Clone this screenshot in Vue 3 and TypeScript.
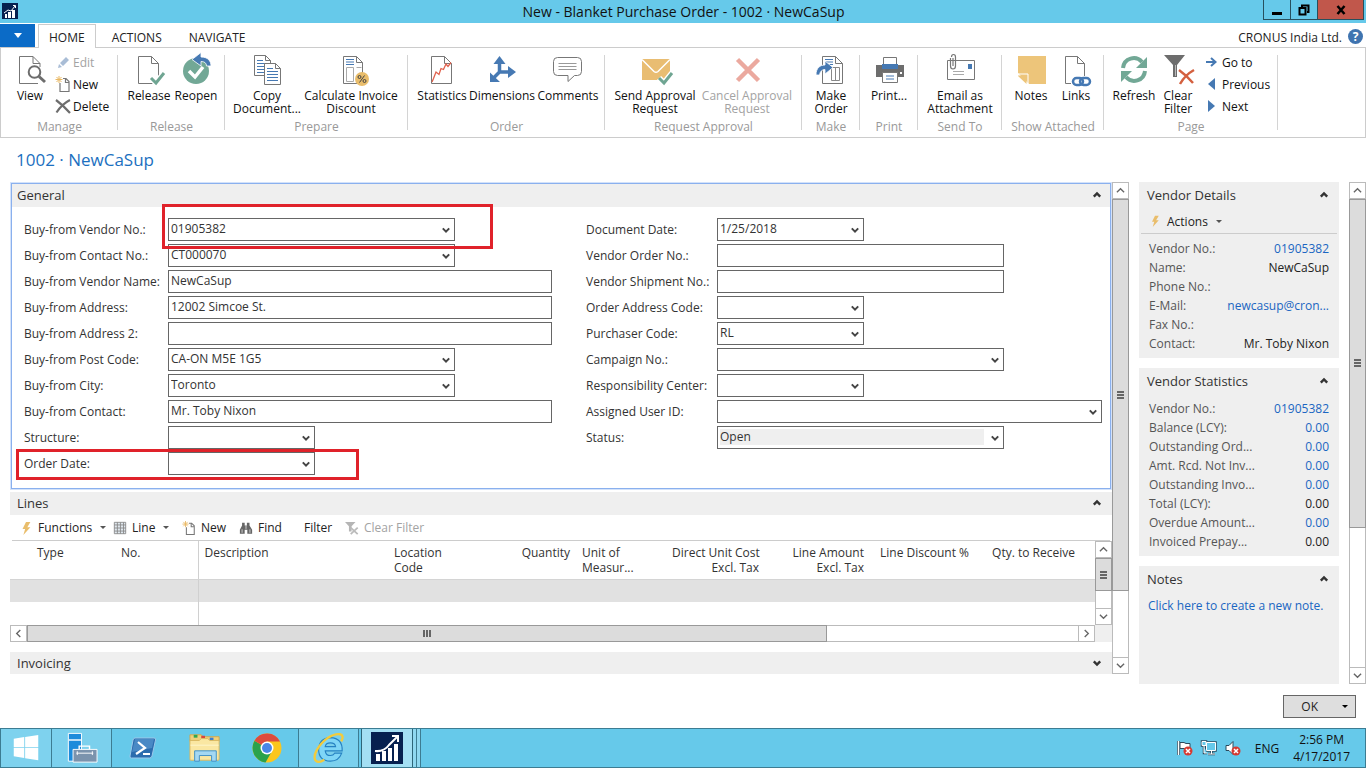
<script setup lang="ts">
import { ref } from 'vue'

interface RibbonButton { label: string; icon: string; disabled?: boolean }
interface RibbonGroup { id: string; caption: string; large: RibbonButton[]; small?: RibbonButton[] }
interface Field { id: string; label: string; value: string; size: 'date' | 'lookup' | 'full'; drop?: boolean; select?: boolean }
interface Fact { label: string; value: string; link?: boolean }

const page = (x: number, y: number, w: number, h: number, f: number): string =>
  `<path d="M${x} ${y}h${w - f}l${f} ${f}v${h - f}h-${w}z" fill="#fff" stroke="#777"/><path d="M${x + w - f} ${y}v${f}h${f}" fill="none" stroke="#777"/>`

const icons: Record<string, string> = {
  view: `<path d="M24 29.500H5.500v-27H19l7 7V13" fill="none" stroke="#777"/><path d="M19 2.500v7h7" fill="none" stroke="#777"/><circle cx="20.500" cy="18" r="5.800" fill="#fff" stroke="#6d6d6d" stroke-width="2"/><path d="M25 22.500l6 5.500" stroke="#6d6d6d" stroke-width="3"/>`,
  release: page(5.5, 2.5, 20, 27, 7) + `<path d="M18 24l5 5 8-10" fill="none" stroke="#fff" stroke-width="6"/><path d="M18 24l5 5 8-10" fill="none" stroke="#6fa592" stroke-width="3"/>`,
  reopen: `<circle cx="16" cy="17" r="13" fill="#72a896"/><path d="M9 17l6 6 8-10" fill="none" stroke="#fff" stroke-width="3.500"/><path d="M12 5.500l9-7v4.500c7 0 10 4 10 9h-4.500c0-3-2-4.500-5.500-4.500V12z" fill="#4679b3" stroke="#fff" stroke-width=".8"/>`,
  copy: page(3.5, 1.5, 16, 20, 5) + `<path d="M6 6.500h6M6 9.500h10M6 12.500h7M6 15.500h7M6 18.500h7" stroke="#4679b3"/>` + page(13.5, 9.5, 16, 21, 5) + `<path d="M16 14.500h6M16 17.500h11M16 20.500h11M16 23.500h11M16 26.500h11" stroke="#4679b3"/>`,
  calc: page(8.5, 2.5, 19, 27, 6) + `<path d="M11 5.500h8M11 8h8M11 10.500h8" stroke="#4679b3"/><path d="M11.500 13.500h7v14h-7zM21.500 13.500h5" fill="none" stroke="#aaa"/><circle cx="27" cy="25" r="7" fill="#e9bd6b"/><path d="M24.500 28.500l5-7" stroke="#444"/><circle cx="24.500" cy="23" r="1.500" fill="none" stroke="#444"/><circle cx="29.500" cy="27" r="1.500" fill="none" stroke="#444"/>`,
  stats: page(5.5, 2.5, 20, 27, 7) + `<path d="M6 28l1.500-3.500L10 18l3 2.500 2-6 2.500 1 2.500-5.500 2 2.500 3-4" fill="none" stroke="#e0614d" stroke-width="1.300"/>`,
  dims: `<path d="M13.500 18V7M13.500 18h11M13.500 18l-6 6" fill="none" stroke="#4679b3" stroke-width="3.500"/><path d="M7.500 10l6-8 6 8zM22 12l8 6-8 6zM4 18.500V28h10z" fill="#4679b3"/>`,
  comments: `<path d="M5.500 3.500h20q4 0 4 4v10q0 4-4 4h-3l-6.500 6v-6H5.500q-4 0-4-4v-10q0-4 4-4z" fill="#fff" stroke="#777"/><path d="M6.500 9.500h18M6.500 12.500h18M6.500 15.500h18" stroke="#999"/>`,
  send: `<path d="M3 5h28v21H3z" fill="#e9bd72"/><path d="M3 5.500l12 12q2 1.500 4 0l12-12" fill="none" stroke="#fff" stroke-width="1.500"/><path d="M20 24l5 5 8-10" fill="none" stroke="#fff" stroke-width="6"/><path d="M20 24l5 5 8-10" fill="none" stroke="#6fa592" stroke-width="3"/>`,
  cancel: `<path d="M6.500 5.500l21 21M27.500 5.500l-21 21" stroke="#eba99f" stroke-width="4.500"/>`,
  make: page(7.5, 2.5, 20, 27, 7) + `<path d="M10 5.500h8M10 8h8M10 10.500h8" stroke="#4679b3"/><path d="M16.500 13.500h8v13h-8zM20.500 13.500v13" fill="none" stroke="#888"/><path d="M1 21c0-7 4-10 9-10V7l8 6.500-8 6.500v-4.500c-3 0-5 2-5.500 5.500z" fill="#4679b3" stroke="#fff" stroke-width=".8"/>`,
  print: `<path d="M3 11h28v12H3z" fill="#6d6d6d"/><path d="M10.500 3.500h13v9h-13z" fill="#fff" stroke="#777"/><path d="M9 10h16v5H9z" fill="#4679b3"/><path d="M11 5h12v5H11z" fill="#fff"/><path d="M9.500 18.500h15v10h-15z" fill="#fff" stroke="#777"/><path d="M13 22h8M13 25h8" stroke="#4679b3"/><path d="M27 18h2v2h-2z" fill="#fff"/>`,
  email: `<path d="M3.500 6.500h27v19h-27z" fill="#fff" stroke="#777"/><path d="M24 10h4v5h-4z" fill="#4679b3"/><path d="M9 17.500h11M9 20.500h11" stroke="#aaa"/><path d="M6.500 4v8q0 3 2.500 3t2.500-3V3q0-2.500-2-2.500T7.500 3M9 4v8" fill="none" stroke="#777" stroke-width="1.200"/>`,
  notes: `<path d="M3 2h28v28H14L3 19z" fill="#edc57a"/><path d="M3 20h10v10M13 30L3 20" fill="none" stroke="#fff"/><path d="M3 21.500h8.500V30L3 22z" fill="#edc57a"/>`,
  links: page(5.5, 2.5, 19, 27, 7) + `<path d="M11 22h22v11H11z" fill="#fff"/><rect x="13" y="24" width="10" height="7" rx="3.500" fill="none" stroke="#4679b3" stroke-width="2.500"/><rect x="20" y="24" width="10" height="7" rx="3.500" fill="none" stroke="#4679b3" stroke-width="2.500"/>`,
  refresh: `<path d="M5 14C6 4 18 1 24 8" fill="none" stroke="#72a896" stroke-width="4"/><path d="M29 3v11H18z" fill="#72a896"/><path d="M27 17c-1 10-13 13-19 6" fill="none" stroke="#72a896" stroke-width="4"/><path d="M3 28V17h11z" fill="#72a896"/>`,
  clearfilter: `<path d="M2 1h21l-8 10v12h-4V11z" fill="#6d6d6d"/><path d="M13.500 11v11" stroke="#bbb"/><path d="M17 16q7 5 14 13M32 16q-9 5-14 14" fill="none" stroke="#fff" stroke-width="5"/><path d="M17 16q7 5 14 13M32 16q-9 5-14 14" fill="none" stroke="#d4603f" stroke-width="2.500"/>`,
  edit: `<path d="M3 14l1-4 3 3zM5 9l6-6 3 3-6 6z" fill="#a9bdd6"/>`,
  newdoc: `<path d="M5 7v8.500h9V5.500l-3-3H8M10.500 2.500v4h4" fill="none" stroke="#777" stroke-width="1.200"/><path d="M4 0v7M.5 3.500h7M1.500 1l5 5M6.500 1l-5 5" stroke="#e9b863"/>`,
  del: `<path d="M1 2q8 6 14 13M15 2Q7 6 1.500 14.500" fill="none" stroke="#6d6d6d" stroke-width="2.200"/>`,
  goto: `<path d="M2 8h9M7 4l4.500 4L7 12" fill="none" stroke="#4679b3" stroke-width="2"/>`,
  prev: `<path d="M11 2v12L4 8z" fill="#4679b3"/>`,
  next: `<path d="M4 2v12l7-6z" fill="#4679b3"/>`,
  bolt: `<path d="M8 1h5L9.500 7H13l-8 9 2-7H4z" fill="#e9bd6b"/>`,
  grid: `<path d="M1.500 1.500h13v13h-13zM1.500 4.500h13M1.500 8h13M1.500 11.500h13M5 1.500v13M8.500 1.500v13M12 1.500v13" fill="#dfe7ee" stroke="#888"/>`,
  find: `<path d="M3.500 2h3v3H9V2h3v3l3 5v4.500H9.500V10h-3v4.500H1V10l2.500-5z" fill="#666"/><path d="M3.500 9.500v4M12.500 9.500v4M8 5v4" stroke="#ddd"/>`,
  nofilter: `<path d="M0 1h12L7.500 6v6h-3V6z" fill="#b5b5b5"/><path d="M6.500 7.500l8 7.500M14.500 7.500l-8 7.500" stroke="#bbb" stroke-width="2"/>`,
}

const groups: RibbonGroup[] = [
  { id: 'manage', caption: 'Manage', large: [{ label: 'View', icon: 'view' }], small: [{ label: 'Edit', icon: 'edit', disabled: true }, { label: 'New', icon: 'newdoc' }, { label: 'Delete', icon: 'del' }] },
  { id: 'release', caption: 'Release', large: [{ label: 'Release', icon: 'release' }, { label: 'Reopen', icon: 'reopen' }] },
  { id: 'prepare', caption: 'Prepare', large: [{ label: 'Copy\nDocument...', icon: 'copy' }, { label: 'Calculate Invoice\nDiscount', icon: 'calc' }] },
  { id: 'order', caption: 'Order', large: [{ label: 'Statistics', icon: 'stats' }, { label: 'Dimensions', icon: 'dims' }, { label: 'Comments', icon: 'comments' }] },
  { id: 'approval', caption: 'Request Approval', large: [{ label: 'Send Approval\nRequest', icon: 'send' }, { label: 'Cancel Approval\nRequest', icon: 'cancel', disabled: true }] },
  { id: 'make', caption: 'Make', large: [{ label: 'Make\nOrder', icon: 'make' }] },
  { id: 'print', caption: 'Print', large: [{ label: 'Print...', icon: 'print' }] },
  { id: 'sendto', caption: 'Send To', large: [{ label: 'Email as\nAttachment', icon: 'email' }] },
  { id: 'attached', caption: 'Show Attached', large: [{ label: 'Notes', icon: 'notes' }, { label: 'Links', icon: 'links' }] },
  { id: 'page', caption: 'Page', large: [{ label: 'Refresh', icon: 'refresh' }, { label: 'Clear\nFilter', icon: 'clearfilter' }], small: [{ label: 'Go to', icon: 'goto' }, { label: 'Previous', icon: 'prev' }, { label: 'Next', icon: 'next' }] },
]

const columns = ref<{ id: string; fields: Field[] }[]>([
  {
    id: 'buyer',
    fields: [
      { id: 'vendor-no', label: 'Buy-from Vendor No.:', value: '01905382', size: 'lookup', drop: true },
      { id: 'contact-no', label: 'Buy-from Contact No.:', value: 'CT000070', size: 'lookup', drop: true },
      { id: 'vendor-name', label: 'Buy-from Vendor Name:', value: 'NewCaSup', size: 'full' },
      { id: 'address', label: 'Buy-from Address:', value: '12002 Simcoe St.', size: 'full' },
      { id: 'address-2', label: 'Buy-from Address 2:', value: '', size: 'full' },
      { id: 'post-code', label: 'Buy-from Post Code:', value: 'CA-ON M5E 1G5', size: 'lookup', drop: true },
      { id: 'city', label: 'Buy-from City:', value: 'Toronto', size: 'lookup', drop: true },
      { id: 'contact', label: 'Buy-from Contact:', value: 'Mr. Toby Nixon', size: 'full' },
      { id: 'structure', label: 'Structure:', value: '', size: 'date', drop: true },
      { id: 'order-date', label: 'Order Date:', value: '', size: 'date', drop: true },
    ],
  },
  {
    id: 'document',
    fields: [
      { id: 'doc-date', label: 'Document Date:', value: '1/25/2018', size: 'date', drop: true },
      { id: 'vendor-order', label: 'Vendor Order No.:', value: '', size: 'lookup' },
      { id: 'vendor-ship', label: 'Vendor Shipment No.:', value: '', size: 'lookup' },
      { id: 'order-addr', label: 'Order Address Code:', value: '', size: 'date', drop: true },
      { id: 'purchaser', label: 'Purchaser Code:', value: 'RL', size: 'date', drop: true },
      { id: 'campaign', label: 'Campaign No.:', value: '', size: 'lookup', drop: true },
      { id: 'center', label: 'Responsibility Center:', value: '', size: 'date', drop: true },
      { id: 'user', label: 'Assigned User ID:', value: '', size: 'full', drop: true },
      { id: 'status', label: 'Status:', value: 'Open', size: 'lookup', drop: true, select: true },
    ],
  },
])

const lineTools = [
  { id: 'functions', label: 'Functions', icon: 'bolt', menu: true },
  { id: 'line', label: 'Line', icon: 'grid', menu: true },
  { id: 'new', label: 'New', icon: 'newdoc' },
  { id: 'find', label: 'Find', icon: 'find' },
  { id: 'filter', label: 'Filter', icon: '' },
  { id: 'clear', label: 'Clear Filter', icon: 'nofilter', disabled: true },
]

const lineColumns = [
  { id: 'sel', label: '' },
  { id: 'type', label: 'Type' },
  { id: 'no', label: 'No.' },
  { id: 'desc', label: 'Description' },
  { id: 'loc', label: 'Location\nCode' },
  { id: 'qty', label: 'Quantity', right: true },
  { id: 'uom', label: 'Unit of\nMeasur...' },
  { id: 'cost', label: 'Direct Unit Cost\nExcl. Tax', right: true },
  { id: 'amount', label: 'Line Amount\nExcl. Tax', right: true },
  { id: 'discount', label: 'Line Discount %', right: true },
  { id: 'receive', label: 'Qty. to Receive', right: true },
  { id: 'rest', label: '' },
]

const details: Fact[] = [
  { label: 'Vendor No.:', value: '01905382', link: true },
  { label: 'Name:', value: 'NewCaSup' },
  { label: 'Phone No.:', value: '' },
  { label: 'E-Mail:', value: 'newcasup@cron...', link: true },
  { label: 'Fax No.:', value: '' },
  { label: 'Contact:', value: 'Mr. Toby Nixon' },
]
const statistics: Fact[] = [
  { label: 'Vendor No.:', value: '01905382', link: true },
  { label: 'Balance (LCY):', value: '0.00', link: true },
  { label: 'Outstanding Ord...', value: '0.00', link: true },
  { label: 'Amt. Rcd. Not Inv...', value: '0.00', link: true },
  { label: 'Outstanding Invo...', value: '0.00', link: true },
  { label: 'Total (LCY):', value: '0.00' },
  { label: 'Overdue Amount...', value: '0.00', link: true },
  { label: 'Invoiced Prepay...', value: '0.00' },
]
const factBoxes = [
  { id: 'details', title: 'Vendor Details', facts: details, actions: true },
  { id: 'statistics', title: 'Vendor Statistics', facts: statistics, actions: false },
]

const chevronUp = 'M1 7l4-4 4 4'
const chevronDown = 'M1 3l4 4 4-4'
</script>

<template>
  <div class="window">
    <header class="titlebar">
      <svg class="app-icon" viewBox="0 0 16 16" aria-hidden="true"><path d="M0 0h16v16H0z" fill="#06204f" /><path d="M3 11h2v4H3zM6 9h3v6H6zM10 7h3v8h-3z" fill="#fff" /><path d="M2 10l4-3 3 1 4-5M11 2.500h2.500V5" fill="none" stroke="#fff" /></svg>
      <h1>New - Blanket Purchase Order - 1002 · NewCaSup</h1>
      <div class="window-buttons">
        <button type="button" aria-label="Minimize"><svg viewBox="0 0 12 12"><path d="M1 8h10v3H1z" /></svg></button>
        <button type="button" aria-label="Restore"><svg viewBox="0 0 12 12"><path d="M4 3V1.500h6.500V8H9M1.500 4h6v6.500h-6z" fill="none" stroke="#000" stroke-width="2" /></svg></button>
        <button type="button" class="close" aria-label="Close"><svg viewBox="0 0 12 12"><path d="M2.500 2l7 8M9.500 2l-7 8" stroke="#000" stroke-width="2.500" /></svg></button>
      </div>
    </header>

    <nav class="tabs">
      <button type="button" class="file" aria-label="Application menu"><svg viewBox="0 0 8 5"><path d="M0 0h8L4 5z" fill="#fff" /></svg></button>
      <button type="button" class="tab active">HOME</button>
      <button type="button" class="tab">ACTIONS</button>
      <button type="button" class="tab">NAVIGATE</button>
      <span class="company">CRONUS India Ltd.</span>
      <button type="button" class="help" aria-label="Help">?</button>
    </nav>

    <section class="ribbon">
      <div v-for="g in groups" :key="g.id" class="group" :class="'group-' + g.id">
        <div class="group-items">
          <button v-for="b in g.large" :key="b.label" type="button" class="large" :disabled="b.disabled">
            <svg viewBox="0 0 32 32" v-html="icons[b.icon]"></svg>
            <span>{{ b.label }}</span>
          </button>
          <div v-if="g.small" class="small-list">
            <button v-for="b in g.small" :key="b.label" type="button" class="small" :disabled="b.disabled">
              <svg viewBox="0 0 16 16" v-html="icons[b.icon]"></svg>
              <span>{{ b.label }}</span>
            </button>
          </div>
        </div>
        <div class="caption">{{ g.caption }}</div>
      </div>
    </section>

    <h2 class="record">1002 · NewCaSup</h2>

    <div class="body">
      <main class="sheet">
        <section class="general">
          <button type="button" class="bar"><span>General</span><svg viewBox="0 0 10 10"><path :d="chevronUp" /></svg></button>
          <form class="fields">
            <div v-for="c in columns" :key="c.id" class="column" :class="'column-' + c.id">
              <div v-for="f in c.fields" :key="f.id" class="field">
                <label :for="f.id">{{ f.label }}</label>
                <div class="control" :class="f.size">
                  <select v-if="f.select" :id="f.id" v-model="f.value"><option>Open</option><option>Released</option></select>
                  <input v-else :id="f.id" v-model="f.value" type="text" />
                  <svg v-if="f.drop" class="drop" viewBox="0 0 10 10"><path :d="chevronDown" /></svg>
                </div>
              </div>
            </div>
          </form>
          <div class="mark mark-vendor"></div>
          <div class="mark mark-date"></div>
        </section>

        <section class="lines">
          <button type="button" class="bar"><span>Lines</span><svg viewBox="0 0 10 10"><path :d="chevronUp" /></svg></button>
          <div class="line-tools">
            <button v-for="t in lineTools" :key="t.id" type="button" :class="'tool-' + t.id" :disabled="t.disabled">
              <svg v-if="t.icon" class="tool-icon" viewBox="0 0 16 16" v-html="icons[t.icon]"></svg>
              <span>{{ t.label }}</span>
              <i v-if="t.menu" class="caret"></i>
            </button>
          </div>
          <div class="line-grid">
            <div class="table-wrap">
              <table>
                <thead>
                  <tr><th v-for="c in lineColumns" :key="c.id" scope="col" :class="['col-' + c.id, { right: c.right }]">{{ c.label }}</th></tr>
                </thead>
                <tbody>
                  <tr class="selected"><td v-for="c in lineColumns" :key="c.id" :class="'col-' + c.id"></td></tr>
                  <tr><td v-for="c in lineColumns" :key="c.id" :class="'col-' + c.id"></td></tr>
                </tbody>
              </table>
            </div>
            <div class="vbar vbar-grid">
              <button type="button" aria-label="Scroll up"><svg viewBox="0 0 10 10"><path :d="chevronUp" /></svg></button>
              <div class="thumb"><i></i></div>
              <div class="track"></div>
              <button type="button" aria-label="Scroll down"><svg viewBox="0 0 10 10"><path :d="chevronDown" /></svg></button>
            </div>
            <div class="hbar">
              <button type="button" aria-label="Scroll left"><svg viewBox="0 0 10 10"><path d="M7 1L3 5l4 4" /></svg></button>
              <div class="thumb"><i></i></div>
              <div class="track"></div>
              <button type="button" aria-label="Scroll right"><svg viewBox="0 0 10 10"><path d="M3 1l4 4-4 4" /></svg></button>
            </div>
            <div class="corner"></div>
          </div>
        </section>

        <button type="button" class="bar invoicing"><span>Invoicing</span><svg viewBox="0 0 10 10"><path :d="chevronDown" /></svg></button>
      </main>

      <div class="vbar vbar-sheet">
        <button type="button" aria-label="Scroll up"><svg viewBox="0 0 10 10"><path :d="chevronUp" /></svg></button>
        <div class="thumb"><i></i></div>
        <div class="track"></div>
        <button type="button" aria-label="Scroll down"><svg viewBox="0 0 10 10"><path :d="chevronDown" /></svg></button>
      </div>

      <aside class="facts">
        <section v-for="b in factBoxes" :key="b.id" class="fact-box">
          <button type="button" class="fact-head"><span>{{ b.title }}</span><svg viewBox="0 0 10 10"><path :d="chevronUp" /></svg></button>
          <div v-if="b.actions" class="fact-actions">
            <button type="button"><svg class="tool-icon" viewBox="0 0 16 16" v-html="icons.bolt"></svg><span>Actions</span><i class="caret"></i></button>
          </div>
          <dl>
            <div v-for="f in b.facts" :key="f.label">
              <dt>{{ f.label }}</dt>
              <dd><a v-if="f.link" href="#">{{ f.value }}</a><template v-else>{{ f.value }}</template></dd>
            </div>
          </dl>
        </section>
        <section class="fact-box notes">
          <button type="button" class="fact-head"><span>Notes</span><svg viewBox="0 0 10 10"><path :d="chevronUp" /></svg></button>
          <a href="#">Click here to create a new note.</a>
        </section>
      </aside>

      <div class="vbar vbar-facts">
        <button type="button" aria-label="Scroll up"><svg viewBox="0 0 10 10"><path :d="chevronUp" /></svg></button>
        <div class="thumb"><i></i></div>
        <div class="track"></div>
        <button type="button" aria-label="Scroll down"><svg viewBox="0 0 10 10"><path :d="chevronDown" /></svg></button>
      </div>
    </div>

    <footer class="actions">
      <button type="button" class="ok"><span>OK</span><i class="caret"></i></button>
    </footer>

    <div class="taskbar">
      <button type="button" class="task start" aria-label="Start">
        <svg viewBox="0 0 32 32"><path d="M2 5.500l12-2V15H2zM15 3.300L30 1v14H15zM2 16h12v11.500L2 25.500zM15 16h15v14l-15-2.300z" fill="#fff" /></svg>
      </button>
      <button type="button" class="task open" aria-label="Server Manager">
        <svg viewBox="0 0 34 34"><path d="M2.500 1.500h14V31h-14z" fill="#1d8bdb" stroke="#fff" /><path d="M3 8.500h13" stroke="#fff" stroke-width="1.500" /><path d="M14 18v-3h11v3" fill="none" stroke="#fff" stroke-width="1.500" /><path d="M7.500 18.500H33V32H7.500z" fill="#7b93ad" stroke="#fff" /><path d="M11 22.500h18M12 20.500v4M28 20.500v4" stroke="#fff" /></svg>
      </button>
      <button type="button" class="task" aria-label="PowerShell">
        <svg viewBox="0 0 32 32"><path d="M8 6h19q2 0 1.500 2L25 24q-.5 2-2.500 2h-18q-2 0-1.500-2L6 8q.5-2 2-2z" fill="#2b6cae" stroke="#9cc8ea" /><path d="M8 7h19l-2 9L5 20z" fill="#5d9dd4" opacity=".6" /><path d="M11 10l7 6-9 6M16 22h7" fill="none" stroke="#fff" stroke-width="2.200" /></svg>
      </button>
      <button type="button" class="task" aria-label="File Explorer">
        <svg viewBox="0 0 34 34"><path d="M1 7V3h12l2 2h17v5H1z" fill="#efd07c" stroke="#d3a94c" /><path d="M5 3h4v3H5z" fill="#2fa84f" /><path d="M13 4h4v3h-4z" fill="#d8473d" /><path d="M22 6h4v3h-4z" fill="#3b7fd0" /><path d="M1 9h10l2-2h7l2 2h10v20q0 1-1 1H2q-1 0-1-1z" fill="#fae7a2" stroke="#dab860" /><path d="M1.500 14h30" stroke="#fff6cd" /><path d="M6 31V20h23v11h-5v-6H11v6z" fill="#a5d8f2" stroke="#3f8fc4" /></svg>
      </button>
      <button type="button" class="task" aria-label="Chrome">
        <svg viewBox="0 0 32 32"><circle cx="16" cy="16" r="14.500" fill="#fbc61d" /><path d="M16 16L3.500 8.700A14.500 14.500 0 0 0 14.500 30.400L21 19z" fill="#2ba24c" /><path d="M16 16L3.500 8.700A14.500 14.500 0 0 1 29 9.500H16z" fill="#dd4b3e" /><circle cx="16" cy="16" r="6.500" fill="#fff" /><circle cx="16" cy="16" r="5" fill="#4a86e8" /></svg>
      </button>
      <button type="button" class="task open" aria-label="Internet Explorer">
        <svg viewBox="0 0 34 34"><path d="M31 20H13q.5 5 5.500 5 3 0 4.500-2.500h7.500Q27.500 31 18.500 31 6 30.500 6 18.500 6.500 6.500 18.500 6 31.500 6.500 31 20zM13 15.500h11q-.5-4-5.500-4t-5.500 4z" fill="#7fd6f7" stroke="#2682c2" stroke-width="1.200" /><path d="M30 10C35 1 26 0 16 6 5 14-1 26 3 30.500c2 2 6 1 9-1" fill="none" stroke="#f3cb3c" stroke-width="2.500" /></svg>
      </button>
      <button type="button" class="task current" aria-label="Dynamics NAV">
        <svg viewBox="0 0 32 32"><path d="M0 0h32v32H0z" fill="#06204f" /><path d="M5 22h4v7H5zM11 19h4v10h-4zM17 16h4v13h-4zM23 12h4v17h-4z" fill="#fff" /><path d="M4 19q9 1 14-6l8-8M21 4h6v6" fill="none" stroke="#fff" stroke-width="2" /></svg>
      </button>
      <i class="stack"></i><i class="stack"></i>
      <div class="tray">
        <svg viewBox="0 0 16 16"><path d="M1.500 1v14" stroke="#2b4a5c" stroke-width="3" /><path d="M3 2.500h4l2 1h4v6H9l-2-1H3z" fill="#fff" stroke="#2b4a5c" /><path d="M1.500 1v14" stroke="#fff" stroke-width="1.500" /><circle cx="11" cy="11" r="4.500" fill="#d63a32" /><path d="M9 9l4 4M13 9l-4 4" stroke="#fff" stroke-width="1.500" /></svg>
        <svg viewBox="0 0 16 16"><path d="M5.500 2.500h9v8h-9zM7 14h7M10.500 11v3M1 1.500h4v4H1zM3 6v7h3" fill="#66c9ea" stroke="#2b4a5c" stroke-width="2.500" /><path d="M5.500 2.500h9v8h-9zM7 14h7M10.500 11v3M1 1.500h4v4H1zM3 6v7h3" fill="#66c9ea" stroke="#fff" /></svg>
        <svg viewBox="0 0 16 16"><path d="M1 5.500h3l4-4v13l-4-4H1z" fill="#fff" stroke="#2b4a5c" /><circle cx="11" cy="11" r="4.500" fill="#d63a32" /><path d="M9 9l4 4M13 9l-4 4" stroke="#fff" stroke-width="1.500" /></svg>
        <span class="lang">ENG</span>
        <div class="clock"><span>2:56 PM</span><span>4/17/2017</span></div>
      </div>
    </div>
  </div>
</template>

<style>
body { margin: 0; background: #fff; }
</style>

<style scoped>
* { box-sizing: border-box; }
.window { display: flex; flex-direction: column; min-height: 100vh; font-family: "Open Sans", "Noto Sans", sans-serif; font-size: 12px; color: #222; background: #fff; }
button { font: inherit; color: inherit; background: none; border: 0; padding: 0; margin: 0; }
svg { display: block; overflow: visible; flex: none; }
a { color: #1a66c2; text-decoration: none; }

.titlebar { display: flex; align-items: flex-start; height: 23px; background: #66c9ea; color: #111; }
.app-icon { width: 16px; height: 16px; margin: 3px 86px 0 2px; }
.titlebar h1 { flex: 1; margin: 0; text-align: center; font-size: 14px; font-weight: 400; line-height: 23px; }
.window-buttons { display: flex; margin-right: 2px; }
.window-buttons button { display: grid; place-items: center; width: 27px; height: 20px; border: 1px solid #27505e; border-top: 0; border-right: 0; }
.window-buttons .close { width: 47px; background: #c1574b; border-right: 1px solid #27505e; }
.window-buttons svg { width: 12px; height: 12px; }

.tabs { display: flex; align-items: stretch; height: 25px; padding-top: 1px; margin-bottom: -1px; }
.file { display: grid; place-items: center; width: 35px; height: 23px; background: #0b6bc7; margin-right: 3px; }
.file svg { width: 8px; height: 5px; }
.tab { height: 24px; padding: 2px 10px 0; border: 1px solid transparent; border-bottom: 0; color: #222; margin-right: 5px; }
.tab.active { border-color: #ccc; background: #fff; z-index: 1; }
.company { margin-left: auto; line-height: 28px; }
.help { width: 15px; height: 15px; margin: 5px 3px 0 6px; border-radius: 50%; background: #3f74b0; color: #fff; font-size: 12px; font-weight: 700; line-height: 15px; }

.ribbon { display: flex; border: 1px solid #ccc; padding: 3px 0 2px; }
.group { display: flex; flex-direction: column; position: relative; padding-left: 4px; }
.group::after { content: ""; position: absolute; right: 0; top: 4px; bottom: 5px; width: 1px; background: #d4d4d4; }
.group-items { display: grid; height: 68px; }
.group-manage { width: 117px; }
.group-manage .group-items { grid-template-columns: 50px 1fr; }
.group-release { width: 107px; }
.group-release .group-items { grid-template-columns: 54px 40px; }
.group-prepare { width: 183px; }
.group-prepare .group-items { grid-template-columns: 76px 92px; }
.group-order { width: 197px; }
.group-order .group-items { grid-template-columns: 60px 60px 72px; }
.group-approval { width: 197px; }
.group-approval .group-items { grid-template-columns: 92px 92px; }
.group-make, .group-print { width: 58px; }
.group-make .group-items, .group-print .group-items { grid-template-columns: 50px; }
.group-sendto { width: 84px; }
.group-sendto .group-items { grid-template-columns: 76px; }
.group-attached { width: 102px; }
.group-attached .group-items { grid-template-columns: 50px 40px; }
.group-page { width: 174px; }
.group-page .group-items { grid-template-columns: 52px 36px 1fr; }
.large { display: flex; flex-direction: column; align-items: center; padding-top: 3px; color: #111; }
.large svg { width: 32px; height: 32px; margin-bottom: 3px; }
.large span { white-space: pre; line-height: 13px; text-align: center; }
.small-list { display: flex; flex-direction: column; }
.small { display: flex; align-items: center; gap: 2px; height: 22px; color: #111; }
.small svg { width: 16px; height: 16px; }
.group-page .small { padding-left: 8px; }
button:disabled { color: #a3a3a3; }
.caption { line-height: 16px; text-align: center; color: #999; margin-left: -4px; }

.record { margin: 0; padding: 0 16px; font-size: 17px; font-weight: 400; line-height: 44px; color: #1c70c0; }

.body { display: flex; flex: 1; padding-left: 10px; }
.sheet { flex: 1; min-width: 0; display: flex; flex-direction: column; margin-bottom: 10px; }
.general { position: relative; margin: 1px 1px 3px; border: 1px solid #8ab0ee; box-shadow: 0 0 0 1px #d3e2fa; }
.bar { display: flex; align-items: center; justify-content: space-between; width: 100%; height: 23px; padding: 0 11px 2px 7px; background: #efefef; font-size: 13px; color: #333; }
.general .bar { padding: 0 9px 2px 5px; }
.bar svg, .fact-head svg { width: 8px; height: 8px; }
.bar path, .fact-head path { fill: none; stroke: #333; stroke-width: 3; }
.fields { display: flex; gap: 34px; padding: 11px 8px 13px 12px; }
.column { display: flex; flex-direction: column; gap: 3px; }
.column-buyer { flex: 528 1 0; }
.column-document { flex: 516 1 0; }
.field { display: flex; align-items: center; height: 23px; }
.field label { width: 144px; flex: none; padding-bottom: 1px; white-space: nowrap; color: #333; }
.column-document label { width: 131px; }
.control { position: relative; height: 23px; }
.control.date { width: 147px; }
.control.lookup { width: 287px; }
.control.full { flex: 1; }
.control input, .control select { display: block; width: 100%; height: 100%; margin: 0; padding: 0 22px 2px 2px; border: 1px solid #666; border-radius: 0; background: #fff; font: inherit; color: #333; appearance: none; outline: 0; }
.control select { background: linear-gradient(#efefef, #efefef) no-repeat 2px 2px / calc(100% - 21px) 16px #fff; }
.drop { position: absolute; right: 5px; top: 8px; width: 8px; height: 8px; pointer-events: none; }
.drop path { fill: none; stroke: #444; stroke-width: 2.500; }
.mark { position: absolute; border: 3px solid #e0222a; pointer-events: none; }
.mark-vendor { left: 150px; top: 20px; width: 331px; height: 45px; }
.mark-date { left: 4px; top: 265px; width: 343px; height: 31px; }

.line-tools { display: flex; align-items: center; height: 26px; margin: 0 2px; border-bottom: 1px solid #ccc; }
.line-tools button { display: flex; align-items: center; white-space: nowrap; }
.line-tools .tool-icon { width: 14px; height: 14px; margin-right: 5px; }
.tool-functions { padding-left: 7px; width: 101px; }
.tool-line { width: 69px; }
.tool-new { width: 57px; }
.tool-find { width: 65px; }
.tool-filter { width: 41px; }
.caret { display: inline-block; border: 3px solid transparent; border-top-color: #555; border-bottom: 0; margin-left: 8px; }
.line-grid { display: grid; grid-template-columns: 1fr 17px; grid-template-rows: auto 17px; }
.table-wrap { overflow: hidden; }
table { width: 100%; table-layout: fixed; border-collapse: collapse; }
th { height: 38px; padding: 4px 6px 3px; vertical-align: top; text-align: left; font-weight: 400; line-height: 15px; white-space: pre; color: #333; border-bottom: 1px solid #d4d4d4; }
th.right { text-align: right; }
td { height: 23px; padding: 0; }
.selected td { background: #e1e1e1; }
.col-sel { width: 21px; }
.col-type { width: 84px; }
.col-no { width: 83px; }
th.col-no, td.col-no { border-right: 1px solid #d0d0d0; }
.col-desc { width: 190px; }
.col-loc, .col-uom { width: 90px; }
.col-qty { width: 98px; }
.col-cost { width: 99px; }
.col-amount, .col-discount { width: 105px; }
.col-receive { width: 106px; }
.corner { background: #efefef; }
.invoicing { margin-top: 10px; height: 22px; padding-bottom: 0; }

.vbar { display: flex; flex-direction: column; width: 17px; flex: none; border: 1px solid #bbb; }
.vbar button, .hbar button { display: grid; place-items: center; flex: none; width: 15px; height: 16px; background: #fff; border-bottom: 1px solid #bbb; }
.vbar button:last-child { border-bottom: 0; border-top: 1px solid #bbb; }
.vbar svg, .hbar svg { width: 9px; height: 9px; }
.vbar path, .hbar path { fill: none; stroke: #666; stroke-width: 1.500; }
.thumb { display: grid; place-items: center; background: #dcdcdc; border: 1px solid #999; }
.vbar .thumb { margin: 0 -1px; }
.vbar .thumb i { width: 7px; height: 8px; background: repeating-linear-gradient(#666 0 2px, transparent 2px 3px); }
.vbar-grid .thumb { flex: 33 1 0; }
.vbar-grid .track { flex: 18 1 0; }
.vbar-sheet { margin-bottom: 10px; }
.vbar-sheet .thumb { flex: 392 1 0; }
.vbar-sheet .track { flex: 66 1 0; }
.vbar-facts .thumb { flex: 328 1 0; }
.vbar-facts .track { flex: 140 1 0; }
.hbar { display: flex; border: 1px solid #bbb; }
.hbar button { width: 16px; height: 15px; border-bottom: 0; border-right: 1px solid #bbb; }
.hbar button:last-child { border-right: 0; border-left: 1px solid #bbb; }
.hbar .thumb { flex: 800 1 0; margin: -1px 0; }
.hbar .thumb i { width: 8px; height: 7px; background: repeating-linear-gradient(90deg, #666 0 2px, transparent 2px 3px); }
.hbar .track { flex: 251 1 0; }

.facts { display: flex; flex-direction: column; gap: 10px; width: 200px; flex: none; margin: 0 10px; }
.fact-box { background: #efefef; padding-bottom: 5px; }
.fact-head { display: flex; align-items: center; justify-content: space-between; width: 100%; height: 26px; padding: 0 11px 0 8px; font-size: 13px; color: #333; }
.fact-actions { height: 26px; margin: 0 2px; border-bottom: 1px solid #ccc; }
.fact-actions button { display: flex; align-items: center; height: 26px; padding-left: 8px; }
.fact-actions .tool-icon { width: 12px; height: 12px; margin-right: 6px; }
.fact-box dl { margin: 0; padding: 5px 10px 0; }
.fact-box dl div { display: flex; justify-content: space-between; line-height: 19px; height: 19px; }
.fact-box dt { color: #555; }
.fact-box dd { margin: 0; }
.notes { flex: 1; }
.notes > a { display: block; padding: 5px 9px; line-height: 18px; }

.actions { display: flex; justify-content: flex-end; padding: 11px 10px 10px; }
.ok { display: flex; align-items: center; justify-content: flex-end; width: 73px; height: 23px; padding-right: 7px; background: #dedede; border: 1px solid #666; }
.ok .caret { margin-left: 24px; border-top-color: #000; }

.taskbar { display: flex; height: 40px; background: #66c9ea; border: 1px solid #3c7c92; color: #111; }
.task { display: grid; place-items: center; width: 62px; }
.task svg { width: 32px; height: 32px; }
.task.start { width: 50px; background: #7ed2ee; }
.task.start svg { width: 28px; height: 28px; }
.task.open { width: 61px; background: #7bd0ed; border: 1px solid #3c7c92; border-width: 0 1px; }
.task.current { width: 52px; margin-left: 2px; background: #a3dff3; border: 1px solid #2d6578; border-width: 0 1px; }
.stack { width: 4px; border-right: 1px solid #3c7c92; background: #8fd8f0; }
.tray { display: flex; align-items: center; gap: 8px; margin-left: auto; padding-right: 15px; }
.tray svg { width: 16px; height: 16px; }
.lang { margin: 0 6px 0 6px; }
.clock { display: flex; flex-direction: column; align-items: center; line-height: 17px; }
</style>
